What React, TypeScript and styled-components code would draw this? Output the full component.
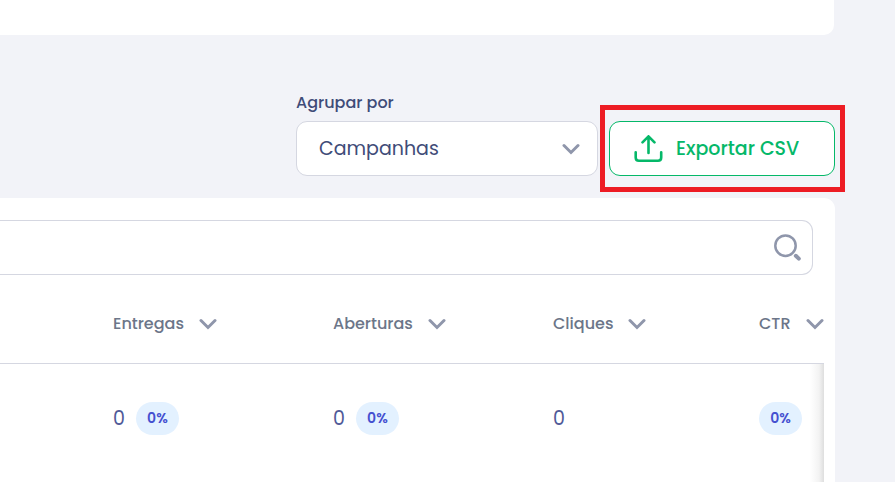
import React from 'react';
import styled, { createGlobalStyle } from 'styled-components';

const GlobalStyle = createGlobalStyle`
  *, *::before, *::after { box-sizing: border-box; }
  html, body { margin: 0; min-height: 100%; background: #f2f3f8; }
  body, button, input, select {
    font-family: Poppins, Inter, "Open Sans", sans-serif;
  }
  #root { min-height: 100vh; display: flex; flex-direction: column; }
`;

const Page = styled.main`
  flex: 1;
  display: flex;
  flex-direction: column;
  padding-right: 60px;
`;

const SummaryCard = styled.section`
  height: 35px;
  margin-right: 1px;
  background: #fff;
  border-radius: 0 0 10px 0;
`;

const Toolbar = styled.div`
  display: flex;
  justify-content: flex-end;
  align-items: flex-end;
  gap: 11px;
  padding: 56px 0 22px;
`;

const Field = styled.div`
  width: 302px;
  display: flex;
  flex-direction: column;
  gap: 6px;
`;

const Label = styled.label`
  font-size: 16px;
  font-weight: 500;
  line-height: 24px;
  color: #3f4c78;
`;

const SelectBox = styled.div`
  position: relative;
`;

const Select = styled.select`
  display: block;
  width: 100%;
  height: 55px;
  padding: 0 50px 0 22px;
  appearance: none;
  border: 1px solid #d5d7e1;
  border-radius: 11px;
  background: #fff;
  color: #3f4c78;
  font-size: 19px;
  font-weight: 400;
`;

const SelectArrow = styled.span`
  position: absolute;
  top: 0;
  right: 18px;
  height: 100%;
  display: flex;
  align-items: center;
  pointer-events: none;
`;

const Highlight = styled.div`
  position: relative;
  &::after {
    content: '';
    position: absolute;
    inset: -16px -10px -16px -9px;
    border: 5px solid #ed1c24;
    pointer-events: none;
  }
`;

const ExportButton = styled.button`
  display: flex;
  align-items: center;
  gap: 13px;
  width: 226px;
  height: 55px;
  padding: 0 0 0 24px;
  border: 1px solid #05b869;
  border-radius: 11px;
  background: #fff;
  color: #05b869;
  font-size: 19px;
  font-weight: 500;
  white-space: nowrap;
`;

const TableCard = styled.section`
  flex: 1;
  padding-top: 22px;
  background: #fff;
  border-radius: 0 11px 0 0;
`;

const SearchBox = styled.div`
  display: flex;
  align-items: center;
  height: 55px;
  margin-right: 22px;
  padding-right: 10px;
  border: 1px solid #d5d7e1;
  border-left: 0;
  border-radius: 0 11px 11px 0;
`;

const SearchInput = styled.input`
  flex: 1;
  min-width: 0;
  height: 100%;
  border: 0;
  outline: 0;
  background: transparent;
  color: #3f4c78;
  font-size: 19px;
`;

const TableArea = styled.div`
  margin-right: 11px;
`;

const Table = styled.table`
  width: 100%;
  table-layout: fixed;
  border-collapse: collapse;
`;

const Col = styled.col<{ $width?: number }>`
  width: ${({ $width }) => ($width ? `${$width}px` : 'auto')};
`;

const HeadCell = styled.th`
  height: 88px;
  padding: 0;
  border-bottom: 1px solid #d5d7e1;
  text-align: left;
  vertical-align: top;
`;

const SortButton = styled.button`
  display: flex;
  align-items: center;
  gap: 15px;
  margin-top: 37px;
  padding: 0;
  border: 0;
  background: transparent;
  color: #6c7689;
  font-size: 16px;
  font-weight: 500;
  line-height: 24px;
  white-space: nowrap;
`;

const BodyRow = styled.tr`
  background: linear-gradient(to left, #dedede 0, #f3f3f3 5px, #fff 14px);
`;

const Cell = styled.td`
  height: 119px;
  padding: 38px 0;
  vertical-align: top;
`;

const Metric = styled.div`
  display: flex;
  align-items: center;
  gap: 11px;
  height: 33px;
  color: #505a98;
  font-size: 19px;
  font-weight: 400;
`;

const Badge = styled.span`
  display: flex;
  align-items: center;
  justify-content: center;
  width: 43px;
  height: 33px;
  border-radius: 17px;
  background: #e3f1ff;
  color: #4550d0;
  font-size: 14px;
  font-weight: 600;
`;

const Chevron = () => (
  <svg width="18" height="12" viewBox="0 0 18 12" fill="none" aria-hidden="true">
    <path d="M2 2.5 9 9.5 16 2.5" stroke="#8f96ab" strokeWidth="3" strokeLinecap="round" strokeLinejoin="miter" />
  </svg>
);

const UploadIcon = () => (
  <svg width="29" height="28" viewBox="0 0 29 28" fill="none" stroke="#05b869" strokeLinecap="round" strokeLinejoin="round" aria-hidden="true">
    <path d="M1.7 17.2V22.6q0 3.2 3.2 3.2H24q3.2 0 3.2-3.2v-5.4" strokeWidth="2.6" />
    <path d="M14.5 18V1.5M8.5 7.3l6-6 6 6" strokeWidth="2.6" />
  </svg>
);

const SearchIcon = () => (
  <svg width="30" height="30" viewBox="0 0 30 30" fill="none" stroke="#8f96ab" aria-hidden="true">
    <circle cx="13.5" cy="12.7" r="10.2" strokeWidth="2.5" />
    <path d="M23.8 22.8l3 2.8" strokeWidth="4" strokeLinecap="round" />
  </svg>
);

const columns = [
  { name: 'Entregas', width: 220, value: '0', rate: '0%' },
  { name: 'Aberturas', width: 220, value: '0', rate: '0%' },
  { name: 'Cliques', width: 206, value: '0' },
  { name: 'CTR', width: 65, rate: '0%' },
];

export default function App() {
  return (
    <>
      <GlobalStyle />
      <Page>
        <SummaryCard />
        <Toolbar>
          <Field>
            <Label htmlFor="group-by">Agrupar por</Label>
            <SelectBox>
              <Select id="group-by" defaultValue="Campanhas">
                <option>Campanhas</option>
              </Select>
              <SelectArrow>
                <Chevron />
              </SelectArrow>
            </SelectBox>
          </Field>
          <Highlight>
            <ExportButton type="button">
              <UploadIcon />
              Exportar CSV
            </ExportButton>
          </Highlight>
        </Toolbar>
        <TableCard>
          <SearchBox>
            <SearchInput type="text" aria-label="Buscar" />
            <SearchIcon />
          </SearchBox>
          <TableArea>
            <Table>
              <colgroup>
                <Col />
                {columns.map((c) => (
                  <Col key={c.name} $width={c.width} />
                ))}
              </colgroup>
              <thead>
                <tr>
                  <HeadCell as="td" />
                  {columns.map((c) => (
                    <HeadCell key={c.name} scope="col">
                      <SortButton type="button">
                        {c.name}
                        <Chevron />
                      </SortButton>
                    </HeadCell>
                  ))}
                </tr>
              </thead>
              <tbody>
                <BodyRow>
                  <Cell />
                  {columns.map((c) => (
                    <Cell key={c.name}>
                      <Metric>
                        {c.value}
                        {c.rate && <Badge>{c.rate}</Badge>}
                      </Metric>
                    </Cell>
                  ))}
                </BodyRow>
              </tbody>
            </Table>
          </TableArea>
        </TableCard>
      </Page>
    </>
  );
}
